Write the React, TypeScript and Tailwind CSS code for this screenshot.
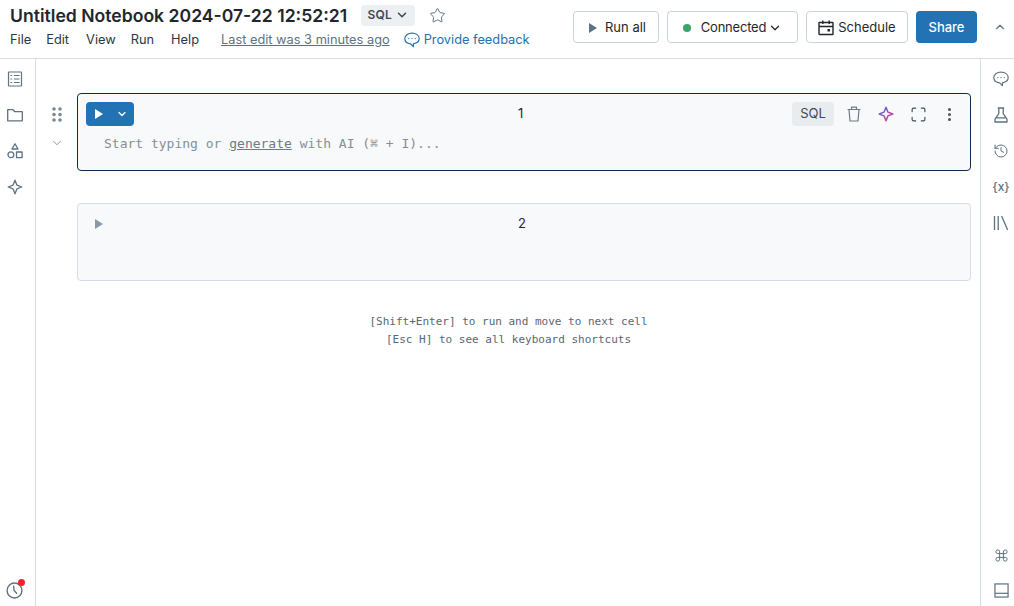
import React from "react";
import { ChevronDown, ChevronUp, Star, Maximize, MoreVertical, History, Command } from "lucide-react";

const SANS = "font-['Inter','Liberation_Sans',sans-serif]";
const MONO = "font-['DejaVu_Sans_Mono',monospace]";

const Tri = ({ className = "" }: { className?: string }) => (
  <svg viewBox="0 0 8 10" className={className} fill="currentColor">
    <path d="M0 0 L8 5 L0 10 Z" />
  </svg>
);

const SPARKLE = "M8 1.2 L9.9 6.1 L14.8 8 L9.9 9.9 L8 14.8 L6.1 9.9 L1.2 8 L6.1 6.1 Z";

const Sparkle = () => (
  <svg viewBox="0 0 16 16" fill="none" className="h-4 w-4" stroke="currentColor" strokeWidth="1.3" strokeLinejoin="round">
    <path d={SPARKLE} />
  </svg>
);

const GradientSparkle = () => (
  <svg viewBox="0 0 16 16" fill="none" className="h-4 w-4" strokeWidth="1.5" strokeLinejoin="round">
    <defs>
      <linearGradient id="ai" x1="0" y1="0" x2="1" y2="1">
        <stop offset="0" stopColor="#4a6fe3" />
        <stop offset="1" stopColor="#e8337f" />
      </linearGradient>
    </defs>
    <path stroke="url(#ai)" d={SPARKLE} />
  </svg>
);

const NotebookIcon = () => (
  <svg viewBox="0 0 16 16" fill="none" stroke="currentColor" strokeWidth="1.2" className="h-4 w-4">
    <rect x="1.5" y="1" width="13" height="14" rx="0.5" />
    <path d="M7 4.5H12.5M7 8H12.5M7 11.5H12.5M3.5 4.5H5.2M3.5 8H5.2M3.5 11.5H5.2" />
  </svg>
);

const FolderIcon = () => (
  <svg viewBox="0 0 16 16" fill="none" stroke="currentColor" strokeWidth="1.3" className="h-4 w-4" strokeLinejoin="round">
    <path d="M0.7 2.7H6L7.8 4.7H15.3V13.8H0.7Z" />
  </svg>
);

const ShapesIcon = () => (
  <svg viewBox="0 0 16 16" fill="none" stroke="currentColor" strokeWidth="1.3" className="h-4 w-4" strokeLinejoin="round">
    <path d="M8 0.8 L11 6 H5 Z" />
    <circle cx="3.9" cy="11.8" r="2.9" />
    <rect x="9.5" y="9" width="5.6" height="5.6" />
  </svg>
);

const ClockIcon = () => (
  <svg viewBox="0 0 16 16" fill="none" stroke="currentColor" strokeWidth="1.3" className="h-[17px] w-[17px]" strokeLinecap="round">
    <circle cx="8" cy="8" r="7" />
    <path d="M7.2 4 L7.6 8 L10 10.5" />
  </svg>
);

const CommentIcon = ({ className = "" }: { className?: string }) => (
  <svg viewBox="0 0 16 16" fill="none" stroke="currentColor" strokeWidth="1.2" className={className} strokeLinejoin="round">
    <path d="M8 1.2C3.9 1.2 0.8 3.4 0.8 6.6C0.8 9.6 3.4 11.6 6.6 11.9L9.4 14.6V11.8C12.9 11.3 15.2 9.4 15.2 6.6C15.2 3.4 12.1 1.2 8 1.2Z" />
    <circle cx="4.8" cy="6.6" r="0.7" fill="currentColor" stroke="none" />
    <circle cx="8" cy="6.6" r="0.7" fill="currentColor" stroke="none" />
    <circle cx="11.2" cy="6.6" r="0.7" fill="currentColor" stroke="none" />
  </svg>
);

const BeakerIcon = () => (
  <svg viewBox="0 0 16 16" fill="none" stroke="currentColor" strokeWidth="1.3" className="h-4 w-4" strokeLinejoin="round">
    <path d="M4.8 1H11.2M5.8 1V6.6L2 12.2V15H14V12.2L10.2 6.6V1M3.2 10.8H12.8" />
  </svg>
);

const LibraryIcon = () => (
  <svg viewBox="0 0 16 16" fill="none" stroke="currentColor" strokeWidth="1.3" className="h-4 w-4">
    <path d="M1.5 1V15M5.2 1V15M8.6 1L14.6 15" />
  </svg>
);

const PanelIcon = () => (
  <svg viewBox="0 0 16 16" fill="none" stroke="currentColor" strokeWidth="1.3" className="h-[15px] w-[15px]">
    <rect x="1" y="1" width="14" height="14" />
    <path d="M1 11H15" />
  </svg>
);

const BucketIcon = () => (
  <svg viewBox="0 0 16 16" fill="none" stroke="currentColor" strokeWidth="1.2" className="h-4 w-4" strokeLinejoin="round">
    <path d="M1.5 3.5H14.5M5.5 3.5V1.2H10.5V3.5M3 3.5L4 15H12L13 3.5" />
  </svg>
);

const CalendarIcon = () => (
  <svg viewBox="0 0 16 16" fill="none" stroke="currentColor" strokeWidth="1.4" className="h-4 w-4">
    <rect x="1" y="2.5" width="14" height="12" rx="0.5" />
    <path d="M1 6.5H15M4.8 0.5V4M11.2 0.5V4" />
    <rect x="9.5" y="9" width="2.5" height="2.5" fill="currentColor" stroke="none" />
  </svg>
);

const GripIcon = () => (
  <svg viewBox="0 0 10 15" fill="currentColor" className="h-[15px] w-[10px]">
    <circle cx="2" cy="2" r="1.8" />
    <circle cx="8" cy="2" r="1.8" />
    <circle cx="2" cy="7.5" r="1.8" />
    <circle cx="8" cy="7.5" r="1.8" />
    <circle cx="2" cy="13" r="1.8" />
    <circle cx="8" cy="13" r="1.8" />
  </svg>
);

const Cell = ({ index, active }: { index: number; active?: boolean }) => (
  <div className={`relative h-[78px] rounded-[4px] border bg-[#f7f9fb] ${active ? "border-[#0e2f4b]" : "border-[#d5dde4]"}`}>
    <div className="flex h-[39px] items-center">
      <div className="w-[8px]" />
      {active ? (
        <div className="flex h-6 w-12 items-center justify-between rounded-[4px] bg-[#2272b4] pl-[9px] pr-[6px] text-white">
          <Tri className="h-[10px] w-[8px]" />
          <ChevronDown className="h-3 w-3" strokeWidth={2.5} />
        </div>
      ) : (
        <Tri className="ml-[9px] h-[10px] w-[8px] text-[#8b98a3]" />
      )}
      <div className="flex-1" />
    </div>
    <span className={`absolute left-[440px] top-[10px] text-[13px] text-[#1f272d] ${SANS}`}>{index}</span>
    {active && (
      <>
        <div className="absolute right-[12px] top-[8px] flex h-6 items-center text-[#5f7281]">
          <span className={`flex h-6 w-[42px] items-center justify-center rounded-[4px] bg-[#e8ecef] text-[13px] text-[#3d4a54] ${SANS}`}>SQL</span>
          <div className="ml-[12px] text-[#6f7c87]"><BucketIcon /></div>
          <div className="ml-[16px]"><GradientSparkle /></div>
          <Maximize className="ml-[16px] h-[17px] w-[17px] text-[#3f4d58]" strokeWidth={1.6} />
          <MoreVertical className="ml-[14px] h-[17px] w-[17px] text-[#4a5a67]" strokeWidth={2.4} />
        </div>
        <div className={`pl-[26px] pt-[1px] text-[13px] leading-[20px] text-[#858f97] ${MONO}`}>
          Start typing or <span className="text-[#6f7a83] underline">generate</span> with AI (⌘ + I)...
        </div>
      </>
    )}
  </div>
);

export default function App() {
  return (
    <div className={`flex h-[606px] w-[1014px] flex-col overflow-hidden bg-white ${SANS}`}>
      <header className="flex h-[59px] shrink-0 items-start border-b border-[#d9dee3]">
        <div className="flex flex-1 flex-col pl-[10px]">
          <div className="flex h-[30px] items-center">
            <h1 className="pt-[1px] text-[17.6px] font-semibold leading-none text-[#1f272d]">Untitled Notebook 2024-07-22 12:52:21</h1>
            <div className="ml-[14px] flex h-[21px] w-[54px] items-center justify-center gap-[3px] rounded-[4px] bg-[#edf0f3] text-[12px] font-semibold tracking-[0.3px] text-[#3d4a54]">
              SQL <ChevronDown className="h-[14px] w-[14px]" strokeWidth={2.6} />
            </div>
            <Star className="ml-[14px] h-[17px] w-[17px] text-[#5f7281]" strokeWidth={1.4} />
          </div>
          <div className="flex items-center text-[12.8px] text-[#2b3640]">
            <span>File</span>
            <span className="ml-[15px]">Edit</span>
            <span className="ml-[17px]">View</span>
            <span className="ml-[15px]">Run</span>
            <span className="ml-[17px]">Help</span>
            <span className="ml-[22px] text-[#5f7281] underline">Last edit was 3 minutes ago</span>
            <span className="ml-[14px] flex items-center gap-[4px] text-[#2272b4]">
              <CommentIcon className="h-4 w-4" /> Provide feedback
            </span>
          </div>
        </div>
        <div className="mt-[11px] flex items-center pr-[7px] text-[13px] text-[#1f272d]">
          <button className="flex h-8 w-[86px] items-center justify-center gap-[8px] rounded-[4px] border border-[#cbd3da] bg-white pl-[3px] pt-[1px]">
            <Tri className="h-[10px] w-[8px] text-[#5f7281]" /> Run all
          </button>
          <button className="ml-2 flex h-8 w-[131px] items-center justify-center gap-[2px] rounded-[4px] border border-[#cbd3da] bg-white pt-[1px]">
            <span className="mr-[8px] h-2 w-2 rounded-full bg-[#3ba66b]" /> <span className="tracking-[-0.2px]">Connected</span> <ChevronDown className="h-[14px] w-[14px]" strokeWidth={2.2} />
          </button>
          <button className="ml-2 flex h-8 w-[102px] items-center justify-center gap-[4px] rounded-[4px] border border-[#cbd3da] bg-white pt-[1px]">
            <CalendarIcon /> Schedule
          </button>
          <button className="ml-2 h-8 w-[61px] rounded-[4px] bg-[#2272b4] pt-[1px] font-medium text-white">Share</button>
          <ChevronUp className="ml-[16px] h-[14px] w-[14px] text-[#5f7281]" strokeWidth={2} />
        </div>
      </header>
      <div className="flex min-h-0 flex-1">
        <aside className="flex w-[36px] shrink-0 flex-col items-center border-r border-[#d9dee3] pr-[6px] pt-[12px] text-[#5f7281]">
          <div className="flex flex-col gap-[20px]">
            <NotebookIcon />
            <FolderIcon />
            <ShapesIcon />
            <Sparkle />
          </div>
          <div className="flex-1" />
          <div className="relative mb-[7px]">
            <ClockIcon />
            <span className="absolute -right-[2px] -top-[3px] h-[7px] w-[7px] rounded-full bg-[#f5222d]" />
          </div>
        </aside>
        <main className="flex min-w-0 flex-1 flex-col">
          <div className="flex pt-[34px]">
            <div className="flex w-[41px] flex-col items-center pt-[14px] text-[#7b8894]">
              <GripIcon />
              <ChevronDown className="mt-[14px] h-[14px] w-[14px]" strokeWidth={1.5} />
            </div>
            <div className="mr-[9px] flex flex-1 flex-col gap-[32px]">
              <Cell index={1} active />
              <Cell index={2} />
            </div>
          </div>
          <div className={`mt-[32px] pl-[41px] pr-[40px] text-center text-[11px] leading-[18px] text-[#5a6670] ${MONO}`}>
            <div>[Shift+Enter] to run and move to next cell</div>
            <div>[Esc H] to see all keyboard shortcuts</div>
          </div>
        </main>
        <aside className="flex w-[34px] shrink-0 flex-col items-center border-l border-[#d5dfeb] pl-[7px] pt-[12px] text-[#5f7281]">
          <div className="flex flex-col items-center gap-[20px]">
            <CommentIcon className="h-4 w-4" />
            <BeakerIcon />
            <History className="h-4 w-4" strokeWidth={1.5} />
            <div className={`flex h-4 items-center text-[12px] font-medium leading-none ${SANS}`}>{"{x}"}</div>
            <LibraryIcon />
          </div>
          <div className="flex-1" />
          <div className="mb-[8px] flex flex-col items-center gap-[20px]">
            <Command className="h-[15px] w-[15px]" strokeWidth={1.6} />
            <PanelIcon />
          </div>
        </aside>
      </div>
    </div>
  );
}
